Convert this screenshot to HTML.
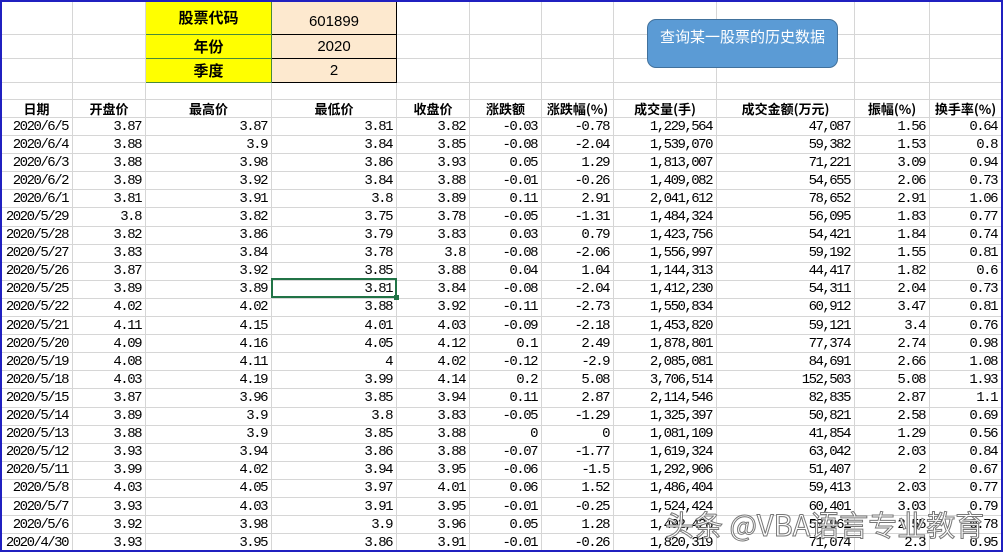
<!DOCTYPE html>
<html><head><meta charset="utf-8"><style>
*{margin:0;padding:0;box-sizing:border-box}
body{width:1003px;height:552px;overflow:hidden;background:#fff;position:relative;font-family:"Liberation Mono","Noto Sans CJK SC",monospace}
table{border-collapse:collapse;table-layout:fixed;position:absolute;left:0;top:0;width:1001px}
td{border:1px solid #d6d6d6;font-size:14px;letter-spacing:-1.5px;text-align:right;padding:0 4px 0 0;white-space:nowrap;overflow:hidden;color:#000;line-height:16px}
tr.d td{height:18.1px}
tr.h td{height:18px;font-family:"Noto Sans CJK SC",sans-serif;font-weight:bold;text-align:center;letter-spacing:0;font-size:13px;padding:0}
td.y{background:#ffff00;border:1px solid #4a8a3a;font-family:"Noto Sans CJK SC",sans-serif;font-weight:bold;text-align:center;font-size:15px;letter-spacing:0;padding:0}
td.p{background:#fde9cf;border:1px solid #000;text-align:center;font-family:"Liberation Sans",sans-serif;font-size:15px;letter-spacing:0;padding:0}
.frame{position:absolute;left:0;top:0;width:1003px;height:552px;border:2px solid #2020c0;pointer-events:none}
.btn{position:absolute;left:647px;top:19px;width:191px;height:49px;background:#5b9bd5;border:1px solid #41719c;border-radius:9px;color:#fff;font-family:"Noto Sans CJK SC",sans-serif;font-size:15px;text-align:center;padding-top:6px}
.sel{position:absolute;left:271px;top:278px;width:126px;height:20px;border:2px solid #217346}
.sel:after{content:"";position:absolute;right:-4px;bottom:-4px;width:5px;height:5px;background:#217346}
.wm{position:absolute;left:665px;top:503px;font-family:"Noto Sans CJK SC",sans-serif;font-size:29px;color:#fff;-webkit-text-stroke:1px #777;letter-spacing:0}
</style></head><body>
<table>
<colgroup><col style="width:72px"><col style="width:73px"><col style="width:126px"><col style="width:125px"><col style="width:73px"><col style="width:72px"><col style="width:72px"><col style="width:103px"><col style="width:138px"><col style="width:75px"><col style="width:72px"></colgroup>
<tr style="height:34px"><td></td><td></td><td class="y">股票代码</td><td class="p" style="padding-top:8px">601899</td><td></td><td></td><td></td><td></td><td></td><td></td><td></td></tr>
<tr style="height:24px"><td></td><td></td><td class="y">年份</td><td class="p">2020</td><td></td><td></td><td></td><td></td><td></td><td></td><td></td></tr>
<tr style="height:24px"><td></td><td></td><td class="y">季度</td><td class="p">2</td><td></td><td></td><td></td><td></td><td></td><td></td><td></td></tr>
<tr style="height:17px"><td></td><td></td><td></td><td></td><td></td><td></td><td></td><td></td><td></td><td></td><td></td></tr>
<tr class="h"><td>日期</td><td>开盘价</td><td>最高价</td><td>最低价</td><td>收盘价</td><td>涨跌额</td><td>涨跌幅(%)</td><td>成交量(手)</td><td>成交金额(万元)</td><td>振幅(%)</td><td>换手率(%)</td></tr>
<tr class="d"><td>2020/6/5</td><td>3.87</td><td>3.87</td><td>3.81</td><td>3.82</td><td>-0.03</td><td>-0.78</td><td>1,229,564</td><td>47,087</td><td>1.56</td><td>0.64</td></tr>
<tr class="d"><td>2020/6/4</td><td>3.88</td><td>3.9</td><td>3.84</td><td>3.85</td><td>-0.08</td><td>-2.04</td><td>1,539,070</td><td>59,382</td><td>1.53</td><td>0.8</td></tr>
<tr class="d"><td>2020/6/3</td><td>3.88</td><td>3.98</td><td>3.86</td><td>3.93</td><td>0.05</td><td>1.29</td><td>1,813,007</td><td>71,221</td><td>3.09</td><td>0.94</td></tr>
<tr class="d"><td>2020/6/2</td><td>3.89</td><td>3.92</td><td>3.84</td><td>3.88</td><td>-0.01</td><td>-0.26</td><td>1,409,082</td><td>54,655</td><td>2.06</td><td>0.73</td></tr>
<tr class="d"><td>2020/6/1</td><td>3.81</td><td>3.91</td><td>3.8</td><td>3.89</td><td>0.11</td><td>2.91</td><td>2,041,612</td><td>78,652</td><td>2.91</td><td>1.06</td></tr>
<tr class="d"><td>2020/5/29</td><td>3.8</td><td>3.82</td><td>3.75</td><td>3.78</td><td>-0.05</td><td>-1.31</td><td>1,484,324</td><td>56,095</td><td>1.83</td><td>0.77</td></tr>
<tr class="d"><td>2020/5/28</td><td>3.82</td><td>3.86</td><td>3.79</td><td>3.83</td><td>0.03</td><td>0.79</td><td>1,423,756</td><td>54,421</td><td>1.84</td><td>0.74</td></tr>
<tr class="d"><td>2020/5/27</td><td>3.83</td><td>3.84</td><td>3.78</td><td>3.8</td><td>-0.08</td><td>-2.06</td><td>1,556,997</td><td>59,192</td><td>1.55</td><td>0.81</td></tr>
<tr class="d"><td>2020/5/26</td><td>3.87</td><td>3.92</td><td>3.85</td><td>3.88</td><td>0.04</td><td>1.04</td><td>1,144,313</td><td>44,417</td><td>1.82</td><td>0.6</td></tr>
<tr class="d"><td>2020/5/25</td><td>3.89</td><td>3.89</td><td>3.81</td><td>3.84</td><td>-0.08</td><td>-2.04</td><td>1,412,230</td><td>54,311</td><td>2.04</td><td>0.73</td></tr>
<tr class="d"><td>2020/5/22</td><td>4.02</td><td>4.02</td><td>3.88</td><td>3.92</td><td>-0.11</td><td>-2.73</td><td>1,550,834</td><td>60,912</td><td>3.47</td><td>0.81</td></tr>
<tr class="d"><td>2020/5/21</td><td>4.11</td><td>4.15</td><td>4.01</td><td>4.03</td><td>-0.09</td><td>-2.18</td><td>1,453,820</td><td>59,121</td><td>3.4</td><td>0.76</td></tr>
<tr class="d"><td>2020/5/20</td><td>4.09</td><td>4.16</td><td>4.05</td><td>4.12</td><td>0.1</td><td>2.49</td><td>1,878,801</td><td>77,374</td><td>2.74</td><td>0.98</td></tr>
<tr class="d"><td>2020/5/19</td><td>4.08</td><td>4.11</td><td>4</td><td>4.02</td><td>-0.12</td><td>-2.9</td><td>2,085,081</td><td>84,691</td><td>2.66</td><td>1.08</td></tr>
<tr class="d"><td>2020/5/18</td><td>4.03</td><td>4.19</td><td>3.99</td><td>4.14</td><td>0.2</td><td>5.08</td><td>3,706,514</td><td>152,503</td><td>5.08</td><td>1.93</td></tr>
<tr class="d"><td>2020/5/15</td><td>3.87</td><td>3.96</td><td>3.85</td><td>3.94</td><td>0.11</td><td>2.87</td><td>2,114,546</td><td>82,835</td><td>2.87</td><td>1.1</td></tr>
<tr class="d"><td>2020/5/14</td><td>3.89</td><td>3.9</td><td>3.8</td><td>3.83</td><td>-0.05</td><td>-1.29</td><td>1,325,397</td><td>50,821</td><td>2.58</td><td>0.69</td></tr>
<tr class="d"><td>2020/5/13</td><td>3.88</td><td>3.9</td><td>3.85</td><td>3.88</td><td>0</td><td>0</td><td>1,081,109</td><td>41,854</td><td>1.29</td><td>0.56</td></tr>
<tr class="d"><td>2020/5/12</td><td>3.93</td><td>3.94</td><td>3.86</td><td>3.88</td><td>-0.07</td><td>-1.77</td><td>1,619,324</td><td>63,042</td><td>2.03</td><td>0.84</td></tr>
<tr class="d"><td>2020/5/11</td><td>3.99</td><td>4.02</td><td>3.94</td><td>3.95</td><td>-0.06</td><td>-1.5</td><td>1,292,906</td><td>51,407</td><td>2</td><td>0.67</td></tr>
<tr class="d"><td>2020/5/8</td><td>4.03</td><td>4.05</td><td>3.97</td><td>4.01</td><td>0.06</td><td>1.52</td><td>1,486,404</td><td>59,413</td><td>2.03</td><td>0.77</td></tr>
<tr class="d"><td>2020/5/7</td><td>3.93</td><td>4.03</td><td>3.91</td><td>3.95</td><td>-0.01</td><td>-0.25</td><td>1,524,424</td><td>60,401</td><td>3.03</td><td>0.79</td></tr>
<tr class="d"><td>2020/5/6</td><td>3.92</td><td>3.98</td><td>3.9</td><td>3.96</td><td>0.05</td><td>1.28</td><td>1,492,428</td><td>58,961</td><td>2.55</td><td>0.78</td></tr>
<tr class="d"><td>2020/4/30</td><td>3.93</td><td>3.95</td><td>3.86</td><td>3.91</td><td>-0.01</td><td>-0.26</td><td>1,820,319</td><td>71,074</td><td>2.3</td><td>0.95</td></tr>
</table>
<div class="btn">查询某一股票的历史数据</div>
<div class="sel"></div>
<div class="wm">头条 @VBA语言专业教育</div>
<div class="frame"></div>
</body></html>
